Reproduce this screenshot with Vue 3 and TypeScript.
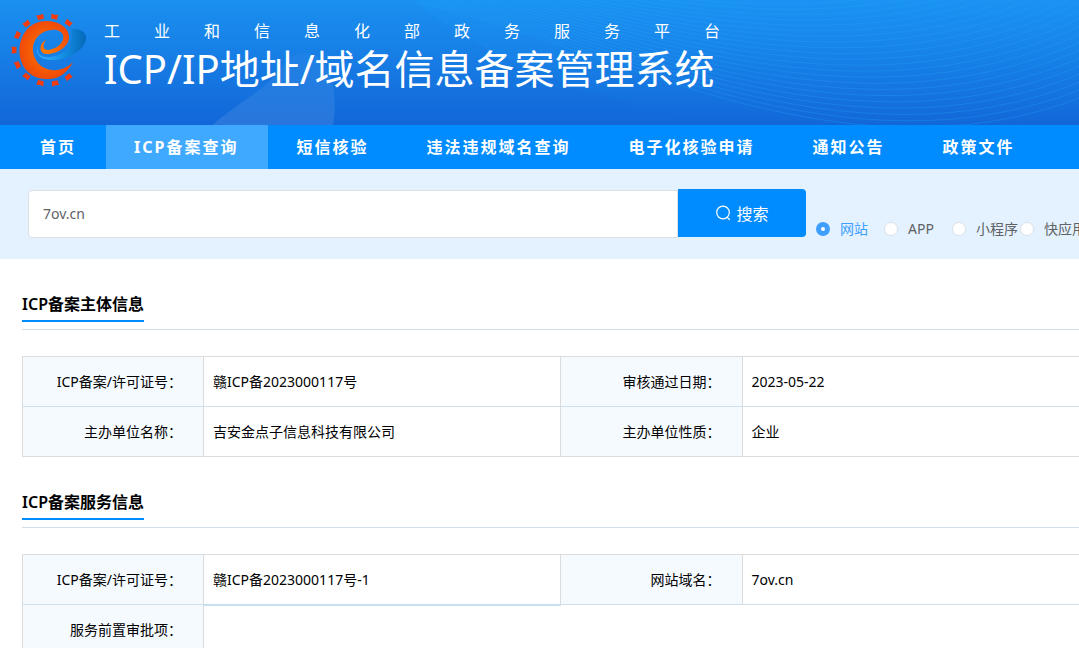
<script setup lang="ts">
import { ref } from 'vue'

interface Cell {
  label: string
  value: string
}

const navItems: string[] = ['首页', 'ICP备案查询', '短信核验', '违法违规域名查询', '电子化核验申请', '通知公告', '政策文件']
const activeNav = ref(1)

const keyword = ref('7ov.cn')
const kinds: string[] = ['网站', 'APP', '小程序', '快应用']
const kind = ref('网站')

const subjectRows: Cell[][] = [
  [
    { label: 'ICP备案/许可证号：', value: '赣ICP备2023000117号' },
    { label: '审核通过日期：', value: '2023-05-22' },
  ],
  [
    { label: '主办单位名称：', value: '吉安金点子信息科技有限公司' },
    { label: '主办单位性质：', value: '企业' },
  ],
]

// Gear teeth around the logo, in degrees clockwise from the top
const teeth: number[] = [-141, -116, -90, -64, -39, -13, 11, 37, 143, 168, 193]

// Wave lines over the right half of the banner
const waves: string[] = Array.from({ length: 30 }, (_, i) => {
  const a = 4 - i * 2
  const b = 40 - i * 3
  const c = 192 - i * 6
  const d = 96 - i * 8
  return `M420 ${a} C600 ${b} 840 ${c} 1085 ${d}`
})
</script>

<template>
  <div class="page">
    <header class="banner">
      <svg class="banner-art" viewBox="0 0 1079 125" preserveAspectRatio="xMidYMid slice" aria-hidden="true">
        <defs>
          <linearGradient id="petal" x1="0" y1="0" x2="0" y2="1">
            <stop offset="0" stop-color="#fff" stop-opacity="0.03" />
            <stop offset="1" stop-color="#fff" stop-opacity="0.1" />
          </linearGradient>
          <linearGradient id="veil" x1="0" y1="0" x2="0" y2="1">
            <stop offset="0" stop-color="#1ba0ff" stop-opacity="0.2" />
            <stop offset="1" stop-color="#1ba0ff" stop-opacity="0" />
          </linearGradient>
        </defs>
        <path d="M211 126C245 98 268 88 283 66C292 53 305 50 318 56C332 66 338 98 333 126Z" fill="url(#petal)" />
        <path d="M412 0C500 70 640 122 800 125H1079V0Z" fill="url(#veil)" />
        <path v-for="(d, i) in waves" :key="i" :d="d" fill="none" stroke="#25a4f5" stroke-opacity="0.3" stroke-width="1" />
      </svg>
      <svg class="logo" viewBox="0 0 90 90" aria-hidden="true">
        <defs>
          <radialGradient id="ember">
            <stop offset="0" stop-color="#ff7a00" />
            <stop offset="1" stop-color="#f04a08" />
          </radialGradient>
          <linearGradient id="sea" x1="0" y1="0" x2="1" y2="0">
            <stop offset="0" stop-color="#35b4ff" />
            <stop offset="0.5" stop-color="#1591e6" />
            <stop offset="1" stop-color="#0568b8" />
          </linearGradient>
        </defs>
        <path d="M38 45C36 52 39 57 46 57C60 58 76 48 71 29C80 28 87 33 86 39C84 52 65 61 50 60C38 59 35 52 38 45Z" fill="url(#sea)" />
        <path d="M73 62C67 74 57 80 46 79C30 79 19 66 19.500 50C20 33 31 21 46 21C60 21 69 28 69 37C69 47 57 54 47 54C38 54 39 43 46 40C43 44 42 50 48 50C58 49 65 41 63 35C60 28 50 29 44 32C33 37 30 50 36 60C42 71 60 75 73 62Z" fill="url(#ember)" />
        <path v-for="t in teeth" :key="t" d="M-3.500 -36.500L-3 -31.500L3 -31.500L3.500 -36.500L0 -36Z" :transform="`translate(48 50) rotate(${t})`" fill="#f23c10" />
      </svg>
      <div class="titles">
        <p class="ministry">工业和信息化部政务服务平台</p>
        <h1>ICP/IP地址/域名信息备案管理系统</h1>
      </div>
    </header>

    <nav class="nav">
      <a v-for="(item, i) in navItems" :key="item" href="#" :class="{ active: i === activeNav }" @click.prevent="activeNav = i">{{ item }}</a>
    </nav>

    <form class="search" @submit.prevent>
      <input v-model="keyword" class="keyword" type="text" aria-label="查询内容" />
      <button class="go" type="submit">
        <svg viewBox="0 0 16 16" width="16" height="16" fill="none" stroke="currentColor" stroke-width="1.200" aria-hidden="true">
          <circle cx="8" cy="7.500" r="6.300" />
          <path d="M12.300 12.300L14.500 14.500" stroke-linecap="round" />
        </svg>
        搜索
      </button>
      <div class="kinds">
        <label v-for="k in kinds" :key="k" :class="{ on: k === kind }">
          <input v-model="kind" type="radio" name="kind" :value="k" />{{ k }}
        </label>
      </div>
    </form>

    <main class="content">
      <section>
        <div class="heading"><h2>ICP备案主体信息</h2></div>
        <table>
          <colgroup><col class="first" /><col /><col class="key" /><col /></colgroup>
          <tbody>
            <tr v-for="(row, i) in subjectRows" :key="i">
              <template v-for="cell in row" :key="cell.label">
                <th scope="row">{{ cell.label }}</th>
                <td>{{ cell.value }}</td>
              </template>
            </tr>
          </tbody>
        </table>
      </section>
      <section>
        <div class="heading"><h2>ICP备案服务信息</h2></div>
        <table>
          <colgroup><col class="first" /><col /><col class="key" /><col /></colgroup>
          <tbody>
            <tr>
              <th scope="row">ICP备案/许可证号：</th>
              <td class="marked">赣ICP备2023000117号-1</td>
              <th scope="row">网站域名：</th>
              <td>7ov.cn</td>
            </tr>
            <tr>
              <th scope="row">服务前置审批项：</th>
              <td colspan="3"></td>
            </tr>
          </tbody>
        </table>
      </section>
    </main>
  </div>
</template>

<style>
body {
  background: #fff;
}
</style>

<style scoped>
.page {
  height: 100vh;
  overflow: hidden;
  font-family: "Noto Sans", "Noto Sans CJK SC", sans-serif;
  font-size: 14px;
  color: #000;
}
.banner {
  position: relative;
  display: flex;
  height: 125px;
  background: linear-gradient(#1a90f0, #1267d8);
  color: #fff;
}
.banner-art {
  position: absolute;
  inset: 0;
  width: 100%;
  height: 100%;
}
.logo {
  position: relative;
  flex: none;
  width: 90px;
  height: 90px;
}
.titles {
  position: relative;
  padding: 19px 0 0 14px;
  white-space: nowrap;
}
.ministry {
  margin: 0;
  font-size: 16px;
  line-height: 24px;
  letter-spacing: 34px;
}
h1 {
  margin: 0;
  font-size: 40px;
  line-height: 52px;
  font-weight: 400;
}
.nav {
  display: flex;
  padding-left: 12px;
  background: #008cff;
}
.nav a {
  padding: 0 30px 0 28px;
  font-size: 16px;
  line-height: 44px;
  font-weight: 700;
  letter-spacing: 2px;
  white-space: nowrap;
  color: #fff;
  text-decoration: none;
}
.nav a.active {
  background: #3ea9ff;
}
.search {
  display: flex;
  align-items: flex-end;
  padding: 20px 0 21px 28px;
  background: #e4f2ff;
}
.keyword {
  box-sizing: border-box;
  flex: 1;
  min-width: 0;
  height: 48px;
  padding: 0 14px 2px;
  border: 1px solid #dcdfe6;
  border-radius: 4px 0 0 4px;
  background: #fff;
  font: inherit;
  color: #606266;
  outline: none;
}
.go {
  display: flex;
  flex: none;
  align-items: center;
  align-self: flex-start;
  justify-content: center;
  gap: 5px;
  width: 128px;
  height: 48px;
  margin-bottom: 1px;
  padding: 0;
  border: 0;
  border-radius: 0 4px 4px 0;
  background: #008cff;
  font: inherit;
  font-size: 16px;
  color: #fff;
}
.kinds {
  display: grid;
  flex: 0 0 263px;
  grid-template-columns: repeat(4, 68px);
  min-width: 0;
  margin-left: 10px;
}
.kinds label {
  display: flex;
  align-items: center;
  gap: 10px;
  line-height: 18px;
  white-space: nowrap;
  color: #606266;
}
.kinds label.on {
  color: #409eff;
}
.kinds input {
  appearance: none;
  box-sizing: border-box;
  flex: none;
  width: 14px;
  height: 14px;
  margin: 0;
  border: 1px solid #dcdfe6;
  border-radius: 50%;
  background: #fff;
}
.kinds input:checked {
  border: 5px solid #409eff;
}
.content {
  padding-left: 22px;
}
.heading {
  display: flex;
  margin-bottom: 26px;
  padding: 33px 0 7px;
  border-bottom: 1px solid #cfdfee;
}
h2 {
  margin: 0;
  padding-bottom: 4px;
  border-bottom: 2px solid #008cff;
  font-size: 16px;
  line-height: 24px;
  font-weight: 600;
}
table {
  width: calc(100% + 20px);
  table-layout: fixed;
  border-collapse: collapse;
  border: 1px solid #dcdcdc;
}
col.first {
  width: 181px;
}
col.key {
  width: 182px;
}
th,
td {
  box-sizing: border-box;
  height: 50px;
  padding: 0 9px;
  border-right: 1px solid #dcdcdc;
  text-align: left;
  font-weight: 400;
  line-height: 20px;
}
th {
  padding-right: 21px;
  background: #f5faff;
  text-align: right;
}
tr + tr > * {
  border-top: 1px solid #cfdfee;
}
td.marked {
  padding-top: 1px;
  border-bottom: 2px solid #c8dff0;
}
</style>
